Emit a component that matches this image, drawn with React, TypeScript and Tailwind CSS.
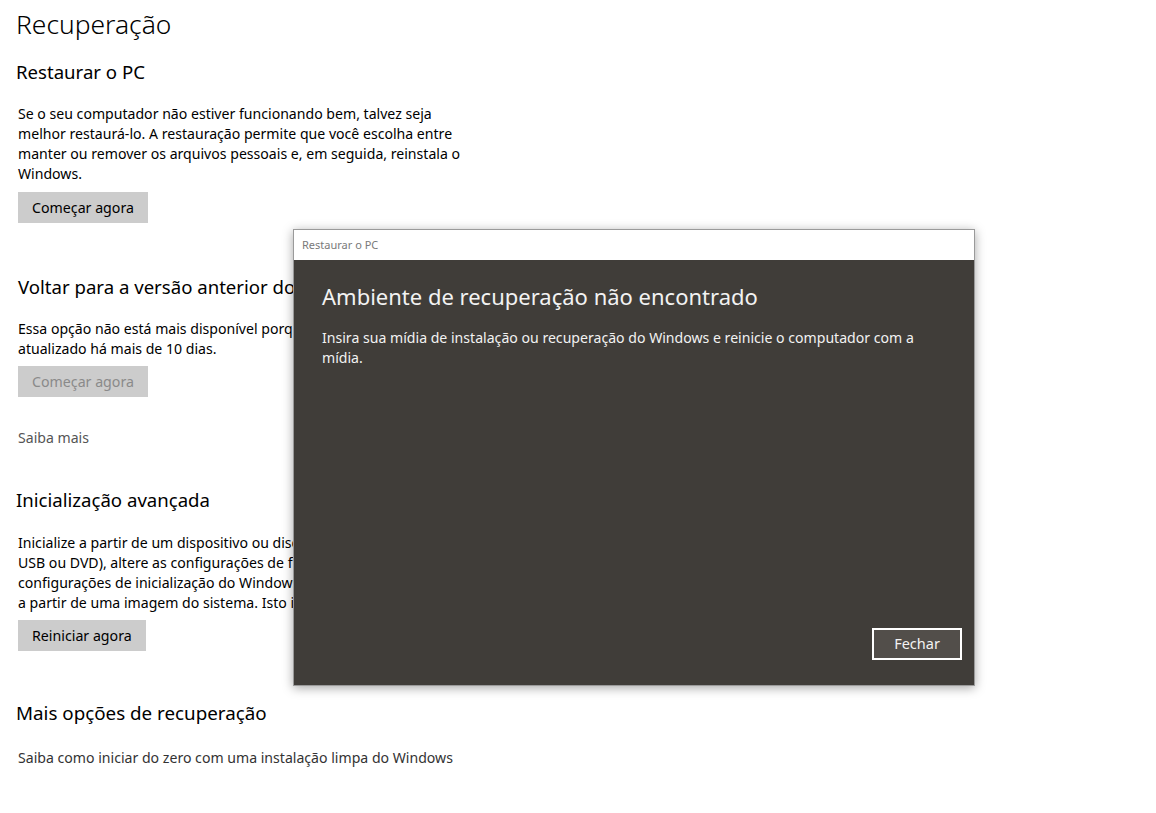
import React from "react";

const font = { fontFamily: "'Noto Sans', 'Open Sans', sans-serif" };

function Button({ label, disabled }: { label: string; disabled?: boolean }) {
  return (
    <button
      className={
        disabled
          ? "h-[31px] px-[14px] bg-[#cccccc] text-[14.2px] text-[#8a8a8a]"
          : "h-[31px] px-[14px] bg-[#cccccc] text-[14.2px] text-black"
      }
    >
      {label}
    </button>
  );
}

export default function App() {
  return (
    <div
      className="relative w-[1156px] h-[813px] bg-white text-black overflow-hidden"
      style={font}
    >
      <div className="pl-[16px] pt-[4px]">
        <h1 className="text-[26.4px] leading-[40px] font-light">Recuperação</h1>

        {/* Restaurar o PC */}
        <h2 className="mt-[15px] text-[18.6px] leading-[26px]">Restaurar o PC</h2>
        <div className="pl-[2px]">
          <p className="mt-[19px] w-[460px] text-[14.1px] leading-[20px]">
            Se o seu computador não estiver funcionando bem, talvez seja
            <br />
            melhor restaurá-lo. A restauração permite que você escolha entre
            <br />
            manter ou remover os arquivos pessoais e, em seguida, reinstala o
            <br />
            Windows.
          </p>
          <div className="mt-[8px]">
            <Button label="Começar agora" />
          </div>
        </div>

        {/* Voltar */}
        <h2 className="mt-[51px] pl-[2px] text-[18.6px] leading-[26px] whitespace-nowrap">
          Voltar para a versão anterior do Windows 10
        </h2>
        <div className="pl-[2px]">
          <p className="mt-[19px] w-[460px] text-[14.1px] leading-[20px]">
            Essa opção não está mais disponível porque o seu PC foi
            <br />
            atualizado há mais de 10 dias.
          </p>
          <div className="mt-[7px]">
            <Button label="Começar agora" disabled />
          </div>
          <p className="mt-[31px] text-[14.1px] leading-[20px] text-[#555555]">
            Saiba mais
          </p>
        </div>

        {/* Inicialização avançada */}
        <h2 className="mt-[39px] text-[18.6px] leading-[26px]">
          Inicialização avançada
        </h2>
        <div className="pl-[2px]">
          <p className="mt-[20px] w-[460px] text-[14.1px] leading-[20px]">
            Inicialize a partir de um dispositivo ou disco (como uma unidade
            <br />
            USB ou DVD), altere as configurações de firmware do PC, altere as
            <br />
            configurações de inicialização do Windows ou restaure o Windows
            <br />
            a partir de uma imagem do sistema. Isto irá reiniciar o PC.
          </p>
          <div className="mt-[7px]">
            <Button label="Reiniciar agora" />
          </div>
        </div>

        {/* Mais opções */}
        <h2 className="mt-[49px] text-[18.8px] leading-[26px]">
          Mais opções de recuperação
        </h2>
        <p className="mt-[22px] pl-[2px] text-[14.1px] leading-[20px] text-[#333333]">
          Saiba como iniciar do zero com uma instalação limpa do Windows
        </p>
      </div>

      {/* Dialog overlay */}
      <div className="absolute left-[293px] top-[229px] w-[682px] h-[457px] flex flex-col border border-[#9a9a9a] shadow-[0_2px_10px_rgba(0,0,0,0.35)]">
        <div className="h-[30px] bg-white flex items-center pl-[8px] text-[11px] text-[#7a7a7a]">
          Restaurar o PC
        </div>
        <div className="flex-1 bg-[#403d39] flex flex-col pl-[28px] pr-[12px] pt-[21px] pb-[25px]">
          <h3 className="text-[22px] leading-[30px] text-[#f2f2f2]">
            Ambiente de recuperação não encontrado
          </h3>
          <p className="mt-[17px] pr-[16px] text-[14.1px] leading-[20px] text-[#f2f2f2]">
            Insira sua mídia de instalação ou recuperação do Windows e reinicie
            o computador com a mídia.
          </p>
          <div className="mt-auto flex justify-end">
            <button className="w-[90px] h-[32px] border-2 border-white bg-[#524e4a] text-[14.5px] text-[#f2f2f2]">
              Fechar
            </button>
          </div>
        </div>
      </div>
    </div>
  );
}
